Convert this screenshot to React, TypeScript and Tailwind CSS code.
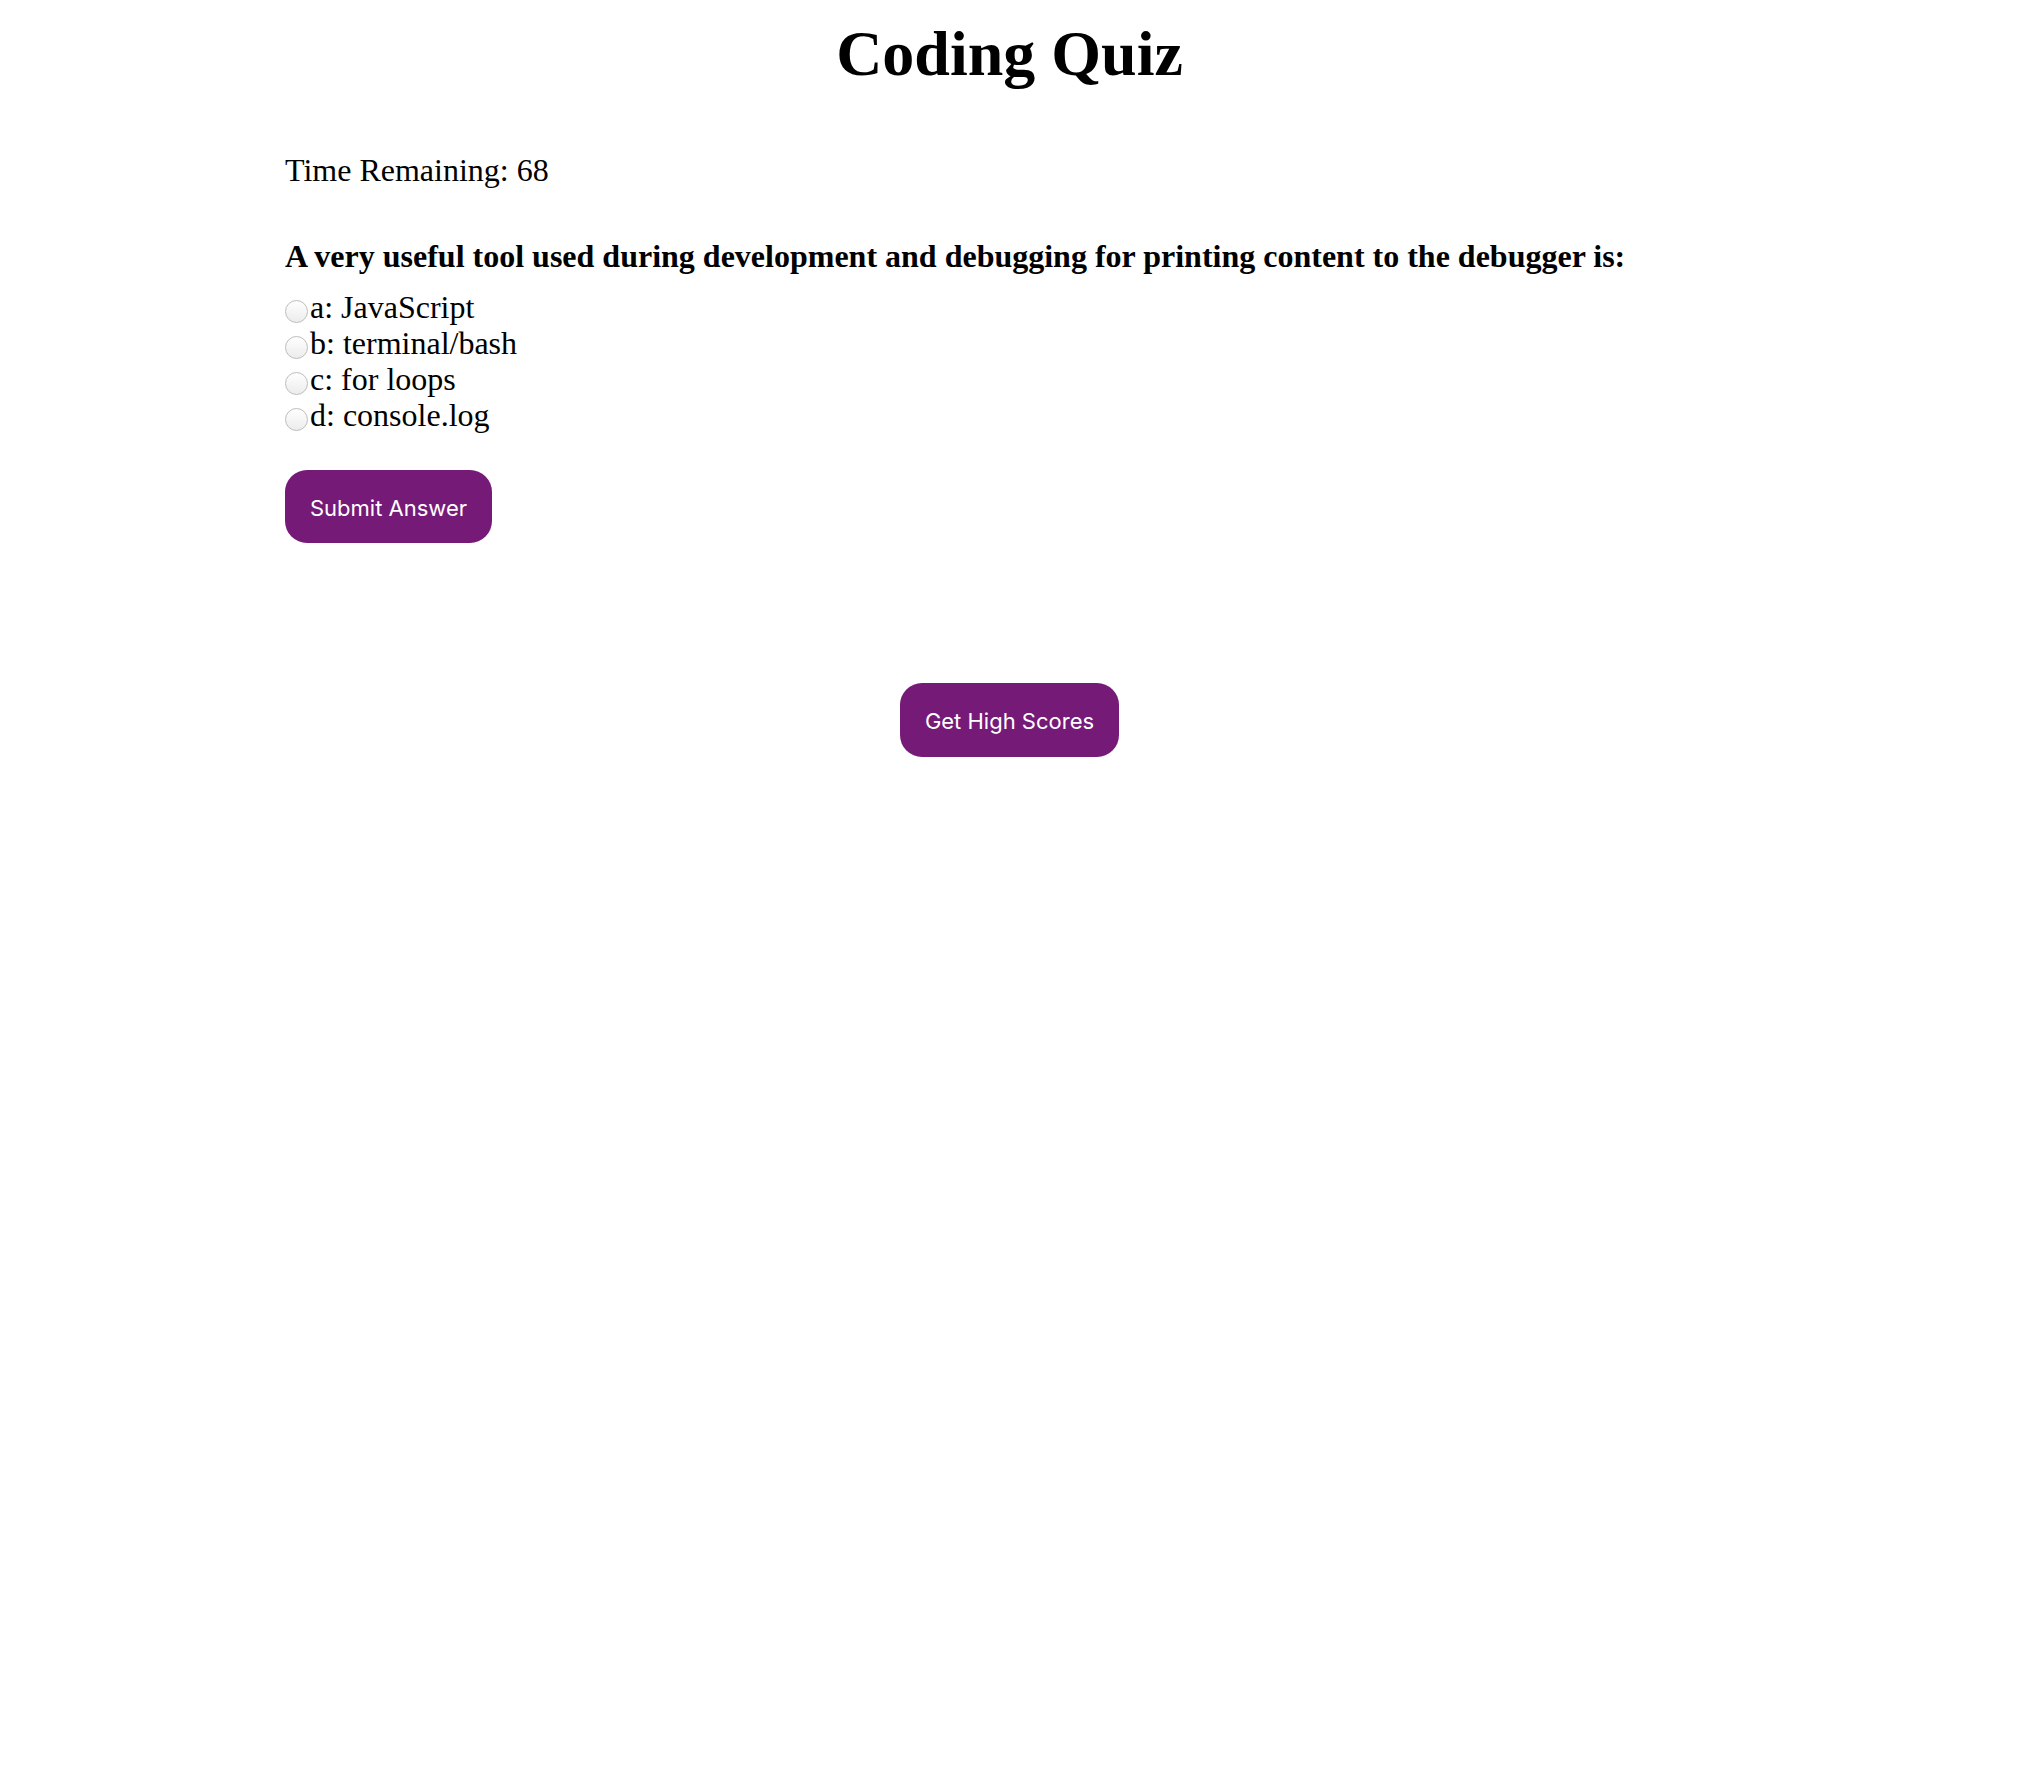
import React from "react";

const options = ["a: JavaScript", "b: terminal/bash", "c: for loops", "d: console.log"];

export default function App() {
  return (
    <div className="w-[2019px] min-h-[1772px] bg-white text-black" style={{ fontFamily: '"Liberation Serif", "Times New Roman", serif' }}>
      <h1 className="pt-[18px] text-center text-[64px] font-bold leading-[72px]">Coding Quiz</h1>
      <div className="pl-[285px]">
        <div className="mt-[62px] text-[32px] leading-[36px]">Time Remaining: 68</div>
        <div className="mt-[50px] text-[32px] font-bold leading-[36px]">
          A very useful tool used during development and debugging for printing content to the debugger is:
        </div>
        <div className="mt-[15px] flex flex-col">
          {options.map((o) => (
            <label key={o} className="flex items-start text-[32px] leading-[36px]">
              <span className="mt-[11px] mr-[2px] h-[23px] w-[23px] shrink-0 rounded-full border border-[#bdbdbd] bg-gradient-to-b from-white to-[#ececec]" />
              <span>{o}</span>
            </label>
          ))}
        </div>
        <button
          className="mt-[37px] h-[73px] rounded-[22px] bg-[#761a78] px-[25px] pt-[3px] text-[22px] text-white"
          style={{ fontFamily: 'Inter, "Liberation Sans", sans-serif' }}
        >
          Submit Answer
        </button>
      </div>
      <div className="mt-[140px] flex justify-center">
        <button
          className="h-[74px] rounded-[22px] bg-[#761a78] px-[25px] pt-[2px] text-[22px] text-white"
          style={{ fontFamily: 'Inter, "Liberation Sans", sans-serif' }}
        >
          Get High Scores
        </button>
      </div>
    </div>
  );
}
